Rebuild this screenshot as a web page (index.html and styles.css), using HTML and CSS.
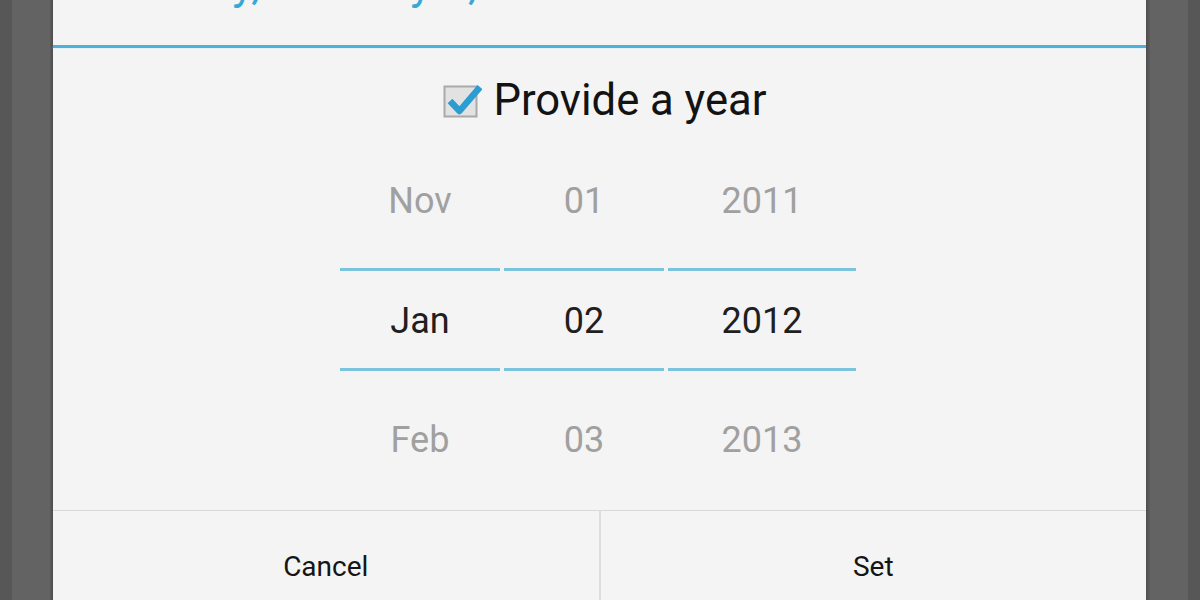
FILE: index.html
```html
<!DOCTYPE html>
<html>
<head>
<meta charset="utf-8">
<link rel="stylesheet" href="styles.css">
</head>
<body>
<div class="screen">
  <div class="strip strip-outer"></div>
  <div class="strip strip-inner"></div>
  <div class="edge edge-left"></div>
  <div class="dialog">
    <div class="title-area"><div class="title">Monday, January 2, 2012</div></div>
    <div class="title-rule"></div>
    <div class="content">
      <div class="check-row">
        <svg class="checkbox" width="40" height="40" viewBox="0 0 40 40">
          <rect x="2.5" y="5.5" width="32" height="30" fill="#e2e2e2" stroke="#a9a9a9" stroke-width="2"/>
          <polyline points="8,20 17.5,30 38,6" fill="none" stroke="#2a9dd2" stroke-width="6.5" stroke-linejoin="round"/>
        </svg>
        <span class="check-label">Provide a year</span>
      </div>
      <div class="picker">
        <div class="col col-month">
          <div class="cell cell-prev">Nov</div>
          <div class="rule"></div>
          <div class="cell cell-sel">Jan</div>
          <div class="rule"></div>
          <div class="cell cell-next">Feb</div>
        </div>
        <div class="col col-day">
          <div class="cell cell-prev">01</div>
          <div class="rule"></div>
          <div class="cell cell-sel">02</div>
          <div class="rule"></div>
          <div class="cell cell-next">03</div>
        </div>
        <div class="col col-year">
          <div class="cell cell-prev">2011</div>
          <div class="rule"></div>
          <div class="cell cell-sel">2012</div>
          <div class="rule"></div>
          <div class="cell cell-next">2013</div>
        </div>
      </div>
    </div>
    <div class="buttons">
      <div class="btn">Cancel</div>
      <div class="btn-divider"></div>
      <div class="btn">Set</div>
    </div>
  </div>
  <div class="edge edge-right"></div>
  <div class="strip strip-inner"></div>
  <div class="strip strip-outer strip-fill"></div>
</div>
</body>
</html>
```

FILE: styles.css
```css
html, body {
  margin: 0;
  padding: 0;
  height: 600px;
  overflow: hidden;
  background: #5e5e5e;
  font-family: Roboto, "Liberation Sans", sans-serif;
}

.screen {
  display: flex;
  width: 1200px;
  height: 600px;
  overflow: hidden;
}

.strip {
  flex: none;
}

.strip-outer {
  width: 12px;
  background: #575757;
}

.strip-fill {
  flex: 1;
}

.strip-inner {
  width: 38px;
  background: #636363;
}

.edge {
  flex: none;
}

.edge-left {
  width: 3px;
  background: linear-gradient(to right, #5c5c5c, #4d4d4d);
}

.edge-right {
  width: 4px;
  background: linear-gradient(to right, #4d4d4d, #5e5e5e);
}

.dialog {
  flex: none;
  width: 1093px;
  height: 600px;
  background: #f4f4f4;
  display: flex;
  flex-direction: column;
}

.title-area {
  height: 45px;
  overflow: hidden;
  flex: none;
}

.title {
  margin-top: -39px;
  padding-left: 40px;
  font-size: 45px;
  line-height: 45px;
  color: #35a8d7;
  white-space: nowrap;
}

.title-rule {
  height: 3px;
  background: #4fb1d8;
  box-shadow: 0 1px 1px #dff1f8;
  flex: none;
}

.content {
  padding-top: 28px;
  display: flex;
  flex-direction: column;
  flex: none;
}

.check-row {
  height: 50px;
  display: flex;
  align-items: center;
  justify-content: center;
  gap: 11px;
  padding-left: 10px;
}

.checkbox {
  flex: none;
  display: block;
}

.check-label {
  font-size: 43.6px;
  line-height: 50px;
  color: #131313;
  white-space: nowrap;
}

.picker {
  margin-top: 15px;
  display: flex;
  justify-content: center;
  gap: 4px;
  padding-right: 3px;
}

.col {
  display: flex;
  flex-direction: column;
}

.col-month, .col-day {
  width: 160px;
}

.col-year {
  width: 188px;
}

.cell {
  text-align: center;
  font-size: 36px;
  white-space: nowrap;
}

.cell-prev {
  height: 120px;
  line-height: 120px;
  padding-bottom: 7px;
  color: #a0a0a0;
}

.cell-sel {
  height: 97px;
  line-height: 100px;
  color: #1f1f1f;
}

.cell-next {
  height: 139px;
  line-height: 138px;
  color: #a0a0a0;
}

.rule {
  height: 3px;
  background: #7cc3de;
}

.buttons {
  flex: 1;
  display: flex;
  border-top: 1px solid #d9d9d9;
}

.btn {
  flex: 1;
  text-align: center;
  font-size: 28px;
  line-height: 112px;
  color: #151515;
}

.btn-divider {
  width: 2px;
  background: #dcdcdc;
  flex: none;
}
```
